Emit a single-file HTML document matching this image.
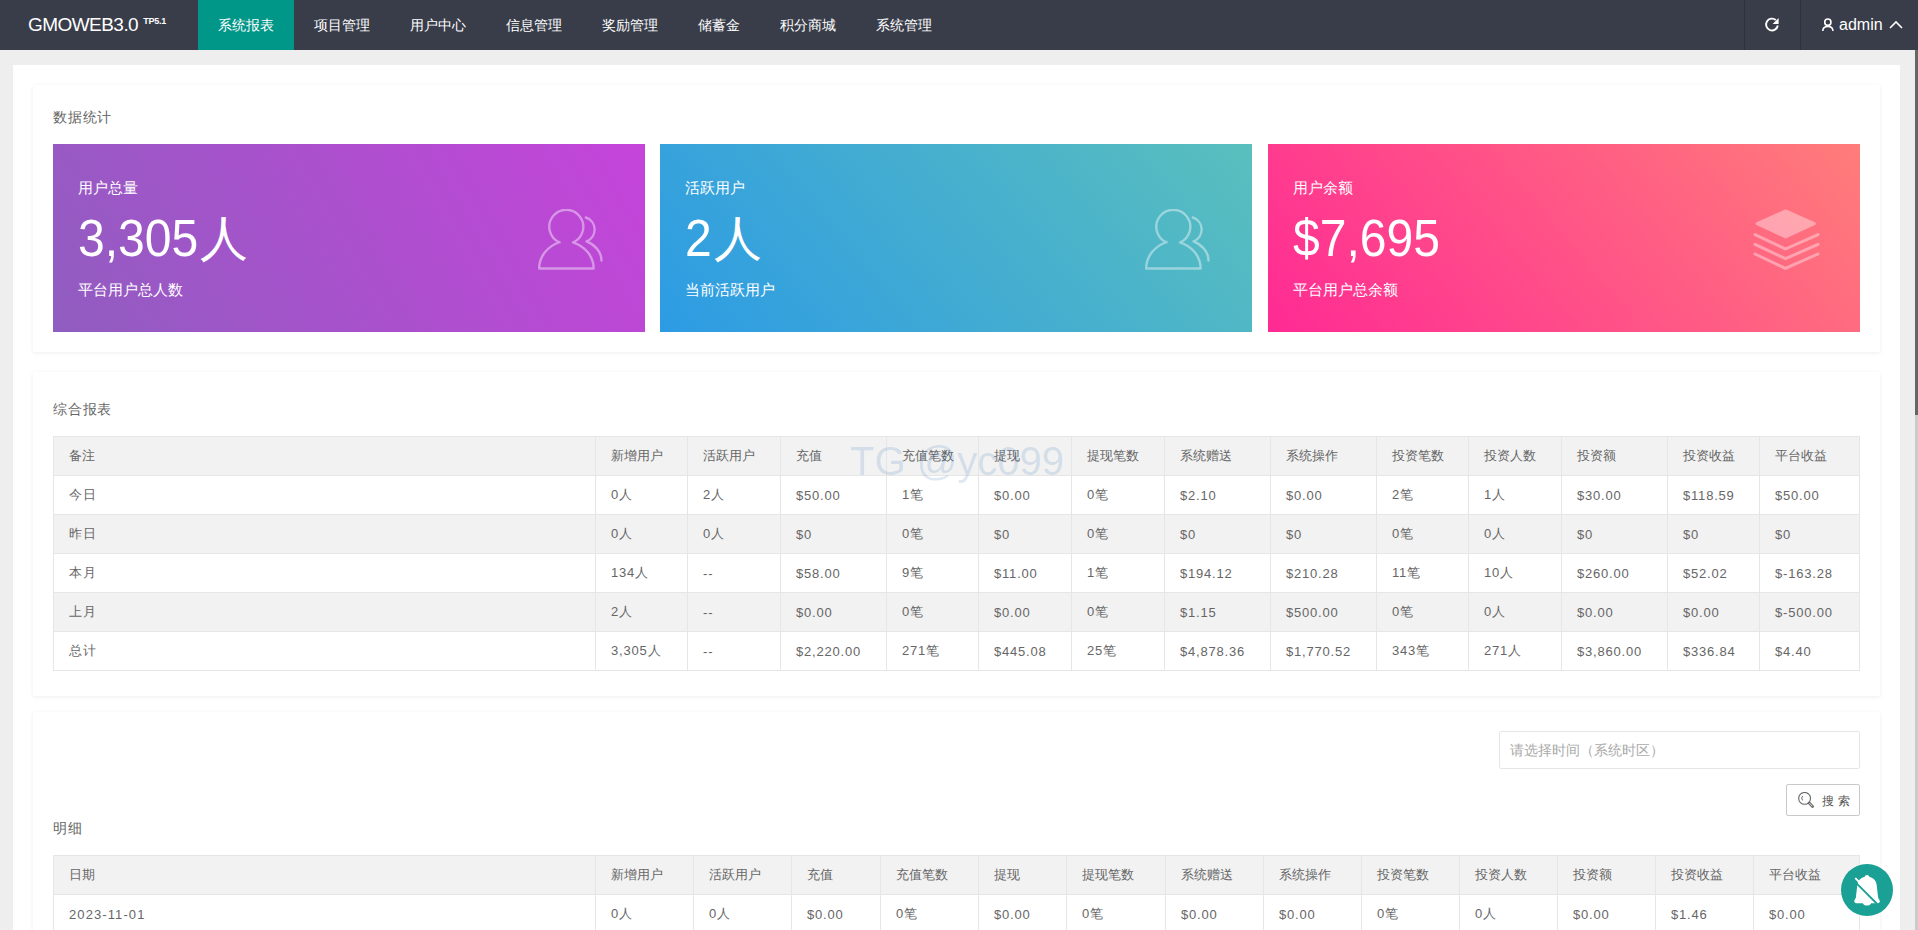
<!DOCTYPE html>
<html><head><meta charset="utf-8">
<style>
*{margin:0;padding:0;box-sizing:border-box}
html,body{width:1918px;height:930px;overflow:hidden}
body{background:#eeeeee;font-family:"Liberation Sans",sans-serif;color:#666;position:relative}
.hd{position:absolute;left:0;top:0;width:1918px;height:50px;background:#393d49}
.logo{position:absolute;left:28px;top:14px;color:#fff;font-size:19px;letter-spacing:-0.55px;white-space:nowrap;line-height:22px}
.logo sup{font-size:9px;font-weight:bold;position:relative;top:1px;margin-left:5px;vertical-align:top;line-height:12px;letter-spacing:-0.2px}
.nav{position:absolute;left:198px;top:0;height:50px}
.nav a{float:left;height:50px;line-height:50px;padding:0 20px;color:#fff;font-size:14px;text-decoration:none}
.nav a.on{background:#009688}
.sep{position:absolute;top:0;width:1px;height:50px;background:#2f323c}
.sb-track{position:absolute;left:1915px;top:50px;width:3px;height:880px;background:#cbcbcb}
.sb-thumb{position:absolute;left:1915px;top:50px;width:3px;height:365px;background:#666}
.outer{position:absolute;left:13px;top:65px;width:1887px;height:900px;background:#fff}
.card{position:absolute;left:33px;width:1847px;background:#fff;box-shadow:0 1px 4px 0 rgba(0,0,0,.07)}
.ttl{position:absolute;left:53px;font-size:14px;color:#666;white-space:nowrap;line-height:16px;letter-spacing:0.8px}
.g{position:absolute;top:144px;width:592px;height:188px;color:#fff}
.g .t1{position:absolute;left:25px;top:35px;font-size:15px;line-height:18px}
.g .big{position:absolute;left:25px;top:62px;font-size:48px;line-height:64px;white-space:nowrap}
.g .t2{position:absolute;left:25px;top:137px;font-size:15px;line-height:18px}
.g svg{position:absolute}
.g .d{display:inline-block;font-size:52px;transform:scaleX(.925);transform-origin:0 0;vertical-align:baseline}
.g .r{font-size:48px;vertical-align:baseline;position:relative;top:-1px}
table{position:absolute;left:53px;border-collapse:collapse;table-layout:fixed;width:1807px}
td,th{border:1px solid #e6e6e6;height:39px;padding:0 15px;font-size:13px;color:#666;font-weight:normal;text-align:left;white-space:nowrap;overflow:hidden}
tr.h td{background:#f2f2f2;letter-spacing:0}
tr td{letter-spacing:0.8px}
tr.e td{background:#f2f2f2}
.wm{position:absolute;left:850px;top:438px;font-size:40px;line-height:46px;color:rgba(0,85,171,0.14);white-space:nowrap;pointer-events:none}
.inp{position:absolute;left:1499px;top:731px;width:361px;height:38px;border:1px solid #e6e6e6;border-radius:2px;padding-left:10px;line-height:36px;font-size:14px;color:#aaa;white-space:nowrap}
.btn{position:absolute;left:1786px;top:784px;width:74px;height:32px;border:1px solid #c9c9c9;border-radius:2px;background:#fff}
.btn span{position:absolute;left:35px;top:8px;font-size:12px;line-height:16px;color:#555;letter-spacing:3.5px}
.bell{position:absolute;left:1841px;top:864px;width:52px;height:52px;border-radius:50%;background:#1aa094}
.bell svg{position:absolute;left:0;top:0}
</style></head><body>
<div class="hd">
  <div class="logo">GMOWEB3.0<sup>TP5.1</sup></div>
  <div class="nav">
    <a class="on">系统报表</a><a>项目管理</a><a>用户中心</a><a>信息管理</a><a>奖励管理</a><a>储蓄金</a><a>积分商城</a><a>系统管理</a>
  </div>
  <div class="sep" style="left:1744px"></div>
  <div class="sep" style="left:1800px"></div>
<svg class="rf" width="16" height="16" viewBox="0 0 16 16" style="position:absolute;left:1764px;top:17px"><path d="M11.8 3 A5.9 5.9 0 1 0 13.8 8.5" fill="none" stroke="#fff" stroke-width="1.9"/><path d="M8.6 7.1 L14.6 7.1 L14.6 1.1 Z" fill="#fff"/></svg>
<svg width="14" height="14" viewBox="0 0 14 14" style="position:absolute;left:1821px;top:18px"><circle cx="6.85" cy="4.15" r="3.1" fill="none" stroke="#fff" stroke-width="1.6"/><path d="M1.8 13 C1.8 10 3.9 8.5 6.85 8.5 C9.8 8.5 11.9 10 11.9 13" fill="none" stroke="#fff" stroke-width="1.6"/></svg>
<div style="position:absolute;left:1839px;top:15px;color:#fff;font-size:16px;line-height:20px">admin</div>
<svg width="14" height="9" viewBox="0 0 14 9" style="position:absolute;left:1889px;top:20px"><path d="M1 8 L7 2 L13 8" fill="none" stroke="#fff" stroke-width="1.6"/></svg>

</div>
<div class="sb-track"></div><div class="sb-thumb"></div>
<div class="outer"></div>

<div class="card" style="top:85px;height:267px"></div>
<div class="ttl" style="top:109px">数据统计</div>


<div class="g" style="left:53px;background:linear-gradient(60deg,#905dc0,#c544da)">
  <div class="t1">用户总量</div><div class="big"><span class="d" style="margin-right:-8px">3,305</span><span class="r">人</span></div><div class="t2">平台用户总人数</div>
  <svg style="left:485px;top:65px" width="66" height="62" viewBox="0 0 66 62"><g fill="none" stroke="#fff" opacity="0.42" stroke-width="2.4" stroke-linejoin="round" stroke-linecap="round"><path d="M21.5 33.4 A17 17 0 1 1 35.1 33.4 C47 37.5 55.6 47 55.6 59.5 L1.2 59.5 C1.2 47 9.6 37.5 21.5 33 Z"/><path d="M47.8 8.5 A12.6 12.6 0 0 1 48.5 32.3 C57 35.5 63.5 43 63.5 51.5"/></g></svg>
</div>
<div class="g" style="left:660px;background:linear-gradient(50deg,#2d9be4,#5abfbd)">
  <div class="t1">活跃用户</div><div class="big"><span class="d" style="margin-right:0px">2</span><span class="r">人</span></div><div class="t2">当前活跃用户</div>
  <svg style="left:485px;top:65px" width="66" height="62" viewBox="0 0 66 62"><g fill="none" stroke="#fff" opacity="0.42" stroke-width="2.4" stroke-linejoin="round" stroke-linecap="round"><path d="M21.5 33.4 A17 17 0 1 1 35.1 33.4 C47 37.5 55.6 47 55.6 59.5 L1.2 59.5 C1.2 47 9.6 37.5 21.5 33 Z"/><path d="M47.8 8.5 A12.6 12.6 0 0 1 48.5 32.3 C57 35.5 63.5 43 63.5 51.5"/></g></svg>
</div>
<div class="g" style="left:1268px;background:linear-gradient(50deg,#ff2a94,#ff7d7a)">
  <div class="t1">用户余额</div><div class="big"><span class="d">$7,695</span></div><div class="t2">平台用户总余额</div>
  <svg style="left:484px;top:64px" width="68" height="64" viewBox="0 0 68 64"><g fill="#fff" stroke="#fff" opacity="0.38" stroke-linejoin="round" stroke-linecap="round"><path d="M33.7 3 L62.2 15.6 L33.7 28.8 L5.2 15.6 Z" stroke-width="3.2"/><path d="M3 26.6 L33.4 41 L66 26.6 M3 36.3 L33.4 50.7 L66 36.3 M3 46 L33.4 60.4 L66 46" fill="none" stroke-width="3"/></g></svg>
</div>

<div class="card" style="top:372px;height:324px"></div>
<div class="ttl" style="top:401px">综合报表</div>
<table style="top:436px"><colgroup><col style="width:542px"><col style="width:92px"><col style="width:93px"><col style="width:106px"><col style="width:92px"><col style="width:93px"><col style="width:93px"><col style="width:106px"><col style="width:106px"><col style="width:92px"><col style="width:93px"><col style="width:106px"><col style="width:92px"><col style="width:100px"></colgroup><tr class="h"><td>备注</td><td>新增用户</td><td>活跃用户</td><td>充值</td><td>充值笔数</td><td>提现</td><td>提现笔数</td><td>系统赠送</td><td>系统操作</td><td>投资笔数</td><td>投资人数</td><td>投资额</td><td>投资收益</td><td>平台收益</td></tr><tr><td>今日</td><td>0人</td><td>2人</td><td>$50.00</td><td>1笔</td><td>$0.00</td><td>0笔</td><td>$2.10</td><td>$0.00</td><td>2笔</td><td>1人</td><td>$30.00</td><td>$118.59</td><td>$50.00</td></tr><tr class="e"><td>昨日</td><td>0人</td><td>0人</td><td>$0</td><td>0笔</td><td>$0</td><td>0笔</td><td>$0</td><td>$0</td><td>0笔</td><td>0人</td><td>$0</td><td>$0</td><td>$0</td></tr><tr><td>本月</td><td>134人</td><td>--</td><td>$58.00</td><td>9笔</td><td>$11.00</td><td>1笔</td><td>$194.12</td><td>$210.28</td><td>11笔</td><td>10人</td><td>$260.00</td><td>$52.02</td><td>$-163.28</td></tr><tr class="e"><td>上月</td><td>2人</td><td>--</td><td>$0.00</td><td>0笔</td><td>$0.00</td><td>0笔</td><td>$1.15</td><td>$500.00</td><td>0笔</td><td>0人</td><td>$0.00</td><td>$0.00</td><td>$-500.00</td></tr><tr><td>总计</td><td>3,305人</td><td>--</td><td>$2,220.00</td><td>271笔</td><td>$445.08</td><td>25笔</td><td>$4,878.36</td><td>$1,770.52</td><td>343笔</td><td>271人</td><td>$3,860.00</td><td>$336.84</td><td>$4.40</td></tr></table>
<div class="wm">TG @yc099</div>

<div class="card" style="top:712px;height:260px"></div>
<div class="ttl" style="top:820px">明细</div>

<div class="inp">请选择时间（系统时区）</div>
<div class="btn"><svg width="17" height="17" viewBox="0 0 17 17" style="position:absolute;left:11px;top:7px"><circle cx="6.6" cy="6.4" r="5.9" fill="none" stroke="#666" stroke-width="1.1"/><path d="M11.2 11 L14.6 14.4" stroke="#666" stroke-width="2.8" stroke-linecap="round"/><path d="M11.7 11.5 L14.2 14" stroke="#fff" stroke-width="0.9" stroke-linecap="round"/><path d="M4.6 3.9 A3.6 3.6 0 0 0 4.6 8.4" fill="none" stroke="#666" stroke-width="1"/></svg><span>搜索</span></div>
<table style="top:855px"><colgroup><col style="width:542px"><col style="width:98px"><col style="width:98px"><col style="width:89px"><col style="width:98px"><col style="width:88px"><col style="width:99px"><col style="width:98px"><col style="width:98px"><col style="width:98px"><col style="width:98px"><col style="width:98px"><col style="width:98px"><col style="width:106px"></colgroup><tr class="h"><td>日期</td><td>新增用户</td><td>活跃用户</td><td>充值</td><td>充值笔数</td><td>提现</td><td>提现笔数</td><td>系统赠送</td><td>系统操作</td><td>投资笔数</td><td>投资人数</td><td>投资额</td><td>投资收益</td><td>平台收益</td></tr><tr><td style="letter-spacing:1.1px">2023-11-01</td><td>0人</td><td>0人</td><td>$0.00</td><td>0笔</td><td>$0.00</td><td>0笔</td><td>$0.00</td><td>$0.00</td><td>0笔</td><td>0人</td><td>$0.00</td><td>$1.46</td><td>$0.00</td></tr></table>
<div class="bell"><svg width="52" height="52" viewBox="0 0 52 52"><path d="M26 11 C27.3 11 28 11.8 28.2 12.8 C32.5 13.8 35.5 17 35.8 22 L37.2 34 C38.3 35.3 39 36.5 38.6 38 C38.2 39 37.2 39.3 36 39.3 L30.2 39.3 C29.6 40.8 28 41.6 26 41.6 C24 41.6 22.4 40.8 21.8 39.3 L16 39.3 C14.8 39.3 13.8 39 13.4 38 C13 36.5 13.7 35.3 14.8 34 L16.2 22 C16.5 17 19.5 13.8 23.8 12.8 C24 11.8 24.7 11 26 11 Z" fill="#fff"/><path d="M12.8 16.6 L36.2 40" stroke="#1aa094" stroke-width="1.8"/><path d="M14.8 14.6 L37.6 37.6" stroke="#fff" stroke-width="1.9" stroke-linecap="round"/></svg></div>


</body></html>
